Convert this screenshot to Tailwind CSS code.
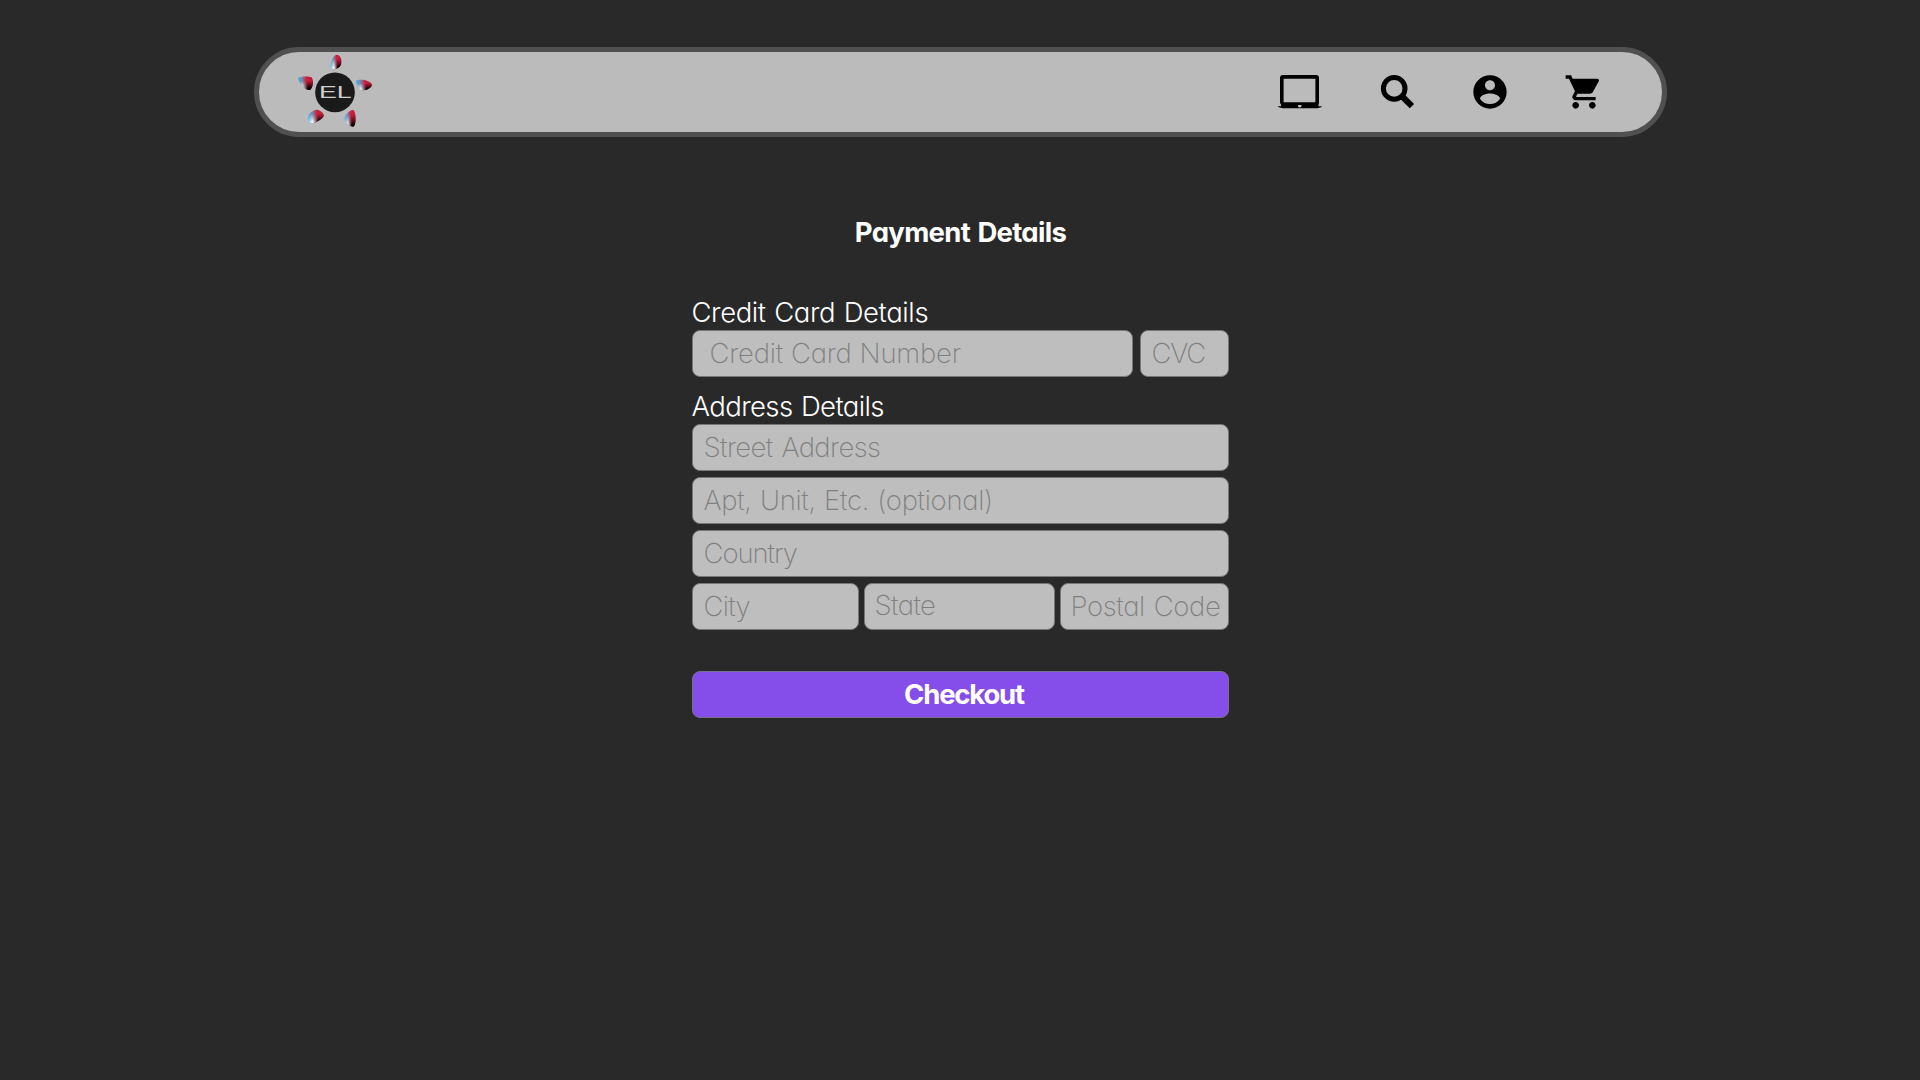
<!DOCTYPE html>
<html lang="en">
<head>
<meta charset="utf-8">
<title>Payment Details</title>
<script src="https://cdn.jsdelivr.net/npm/@tailwindcss/browser@4"></script>
</head>
<body class="min-h-screen overflow-hidden bg-[#292929] font-['Inter',sans-serif] text-[27.5px] text-white [font-feature-settings:'cv11'] flex flex-col items-center pt-[47px]">

<header class="flex h-[90px] w-[1413px] items-center justify-between rounded-[45px] border-[5px] border-[#505050] bg-[#bbbbbb] pl-[37px] pr-[58px]">
  <svg class="size-20" viewBox="0 6 240 240">
    <defs>
      <linearGradient id="warm"><stop offset="0" stop-color="#35b0ea"/><stop offset=".25" stop-color="#6d8fb8"/><stop offset=".55" stop-color="#cf1f3c"/><stop offset="1" stop-color="#b3203a"/></linearGradient>
      <linearGradient id="mono"><stop offset=".05" stop-color="#fff" stop-opacity=".4"/><stop offset=".3" stop-color="#fff"/><stop offset=".65" stop-color="#000"/><stop offset="1" stop-color="#000"/></linearGradient>
      <linearGradient id="fade" x2="0" y2="1"><stop offset=".3" stop-color="#000"/><stop offset=".9" stop-color="#fff"/></linearGradient>
      <mask id="low" maskContentUnits="objectBoundingBox"><rect width="1" height="1" fill="url(#fade)"/></mask>
      <path id="p1" d="M122 14C134 14 139 30 135 44C129 59 103 62 104 50C105 36 110 16 122 14Z"/>
      <path id="p2" d="M180 93C190 85 226 92 228 105C226 115 210 122 198 121C188 118 182 104 180 93Z"/>
      <path id="p3" d="M6 84C11 79 38 78 47 82C54 92 52 112 42 120C28 122 8 100 6 84Z"/>
      <path id="p4" d="M36 205C36 190 52 179 62 179C74 180 84 190 84 197C80 208 54 221 44 220C38 218 35 212 36 205Z"/>
      <path id="p5" d="M172 180C180 184 182 220 174 229C168 235 150 222 146 208C144 198 158 180 172 180Z"/>
    </defs>
    <g fill="url(#warm)"><use href="#p1"/><use href="#p2"/><use href="#p3"/><use href="#p4"/><use href="#p5"/></g>
    <g fill="url(#mono)"><use href="#p1" mask="url(#low)"/><use href="#p2" mask="url(#low)"/><use href="#p3" mask="url(#low)"/><use href="#p4" mask="url(#low)"/><use href="#p5" mask="url(#low)"/></g>
    <circle cx="117" cy="127" r="59.5" fill="#1b1a1b"/>
    <text x="69" y="144" class="font-['Liberation_Sans',sans-serif] text-[48px]" textLength="98" lengthAdjust="spacingAndGlyphs" fill="#cfcfcf">EL</text>
  </svg>

  <nav class="flex items-center gap-[54px] text-black">
    <svg class="h-10 w-11 overflow-visible" viewBox="0 0 44 40" fill="currentColor">
      <path fill-rule="evenodd" d="M5 3h33a3 3 0 0 1 3 3v24a3 3 0 0 1-3 3h-33a3 3 0 0 1-3-3V6a3 3 0 0 1 3-3ZM5.6 6.7V30.3H37.4V6.7Z"/>
      <path fill-rule="evenodd" d="M-.3 34.2H3V31H40.5V34.2H44C43.2 35.7 40 36.3 37 36.3H7C4 36.3 .6 35.7 -.3 34.2ZM21.7 31.7a1.9 1.9 0 1 0 0 3.8a1.9 1.9 0 1 0 0-3.8Z"/>
    </svg>
    <svg class="size-10" viewBox="0 0 40 40" fill="none" stroke="currentColor">
      <circle cx="18.2" cy="16.4" r="10.8" stroke-width="5"/>
      <path d="M25.5 23.7L35.9 34.1" stroke-width="6.2"/>
    </svg>
    <svg class="size-10" viewBox="0 0 24 24" fill="currentColor"><path d="M12 2C6.48 2 2 6.48 2 12s4.48 10 10 10 10-4.48 10-10S17.52 2 12 2zm0 3c1.66 0 3 1.34 3 3s-1.34 3-3 3-3-1.34-3-3 1.34-3 3-3zm0 14.2c-2.5 0-4.71-1.28-6-3.22.03-1.99 4-3.08 6-3.08 1.99 0 5.97 1.09 6 3.08-1.29 1.94-3.5 3.22-6 3.22z"/></svg>
    <svg class="size-10" viewBox="0 0 24 24" fill="currentColor"><path d="M7 18c-1.1 0-1.99.9-1.99 2S5.9 22 7 22s2-.9 2-2-.9-2-2-2zM1 2v2h2l3.6 7.59-1.35 2.45c-.16.28-.25.61-.25.96 0 1.1.9 2 2 2h12v-2H7.42c-.14 0-.25-.11-.25-.25l.03-.12.9-1.63h7.45c.75 0 1.41-.41 1.75-1.03l3.58-6.49c.08-.14.12-.31.12-.48 0-.55-.45-1-1-1H5.21l-.94-2H1zm16 16c-1.1 0-1.99.9-1.99 2s.89 2 1.99 2 2-.9 2-2-.9-2-2-2z"/></svg>
  </nav>
</header>

<h1 class="mt-[75px] h-10 pl-px text-[27.5px] leading-10 font-bold tracking-[-0.7px] [word-spacing:1.5px]">Payment Details</h1>

<form class="mt-[45px] flex w-[537px] flex-col">
  <label class="mb-[3px] h-[30px] leading-[30px] font-[330] tracking-[-0.4px] whitespace-nowrap [word-spacing:1.2px]">Credit Card Details</label>
  <div class="flex gap-[7px]">
    <input class="h-[47px] w-[441px] rounded-lg border border-[#777] bg-[#bebebe] pb-[2px] pl-[17px] font-extralight tracking-[-0.2px] [word-spacing:0.5px] placeholder:text-[#808080]" placeholder="Credit Card Number">
    <input class="h-[47px] w-[89px] rounded-lg border border-[#777] bg-[#bebebe] pb-[2px] pl-[11px] font-extralight tracking-[-1.1px] placeholder:text-[#808080]" placeholder="CVC">
  </div>
  <label class="mt-[14px] mb-[3px] h-[30px] leading-[30px] font-[330] tracking-[-0.6px] whitespace-nowrap [word-spacing:1.2px]">Address Details</label>
  <div class="flex flex-col gap-[6px]">
    <input class="h-[47px] w-full rounded-lg border border-[#777] bg-[#bebebe] pb-[2px] pl-[11px] font-extralight tracking-[-0.55px] [word-spacing:1.5px] placeholder:text-[#808080]" placeholder="Street Address">
    <input class="h-[47px] w-full rounded-lg border border-[#777] bg-[#bebebe] pb-[2px] pl-[11px] font-extralight tracking-[-0.3px] [word-spacing:0.9px] placeholder:text-[#808080]" placeholder="Apt, Unit, Etc. (optional)">
    <input class="h-[47px] w-full rounded-lg border border-[#777] bg-[#bebebe] pb-[2px] pl-[11px] font-extralight tracking-[-1.05px] placeholder:text-[#808080]" placeholder="Country">
    <div class="flex gap-[5px]">
      <input class="h-[47px] w-[167px] rounded-lg border border-[#777] bg-[#bebebe] pb-[2px] pl-[11px] font-extralight tracking-[-0.7px] placeholder:text-[#808080]" placeholder="City">
      <input class="h-[47px] w-[191px] rounded-lg border border-[#777] bg-[#bebebe] pb-[4px] pl-[10px] font-extralight tracking-[-0.55px] placeholder:text-[#808080]" placeholder="State">
      <input class="h-[47px] w-[169px] rounded-lg border border-[#777] bg-[#bebebe] pb-[2px] pl-[10px] font-extralight tracking-[-0.35px] [word-spacing:1.5px] placeholder:text-[#808080]" placeholder="Postal Code">
    </div>
  </div>
  <button type="button" class="mt-[41px] h-[47px] rounded-lg border border-[#77708c] bg-[#854eea] pl-2 font-bold tracking-[-1.2px]">Checkout</button>
</form>

</body>
</html>
